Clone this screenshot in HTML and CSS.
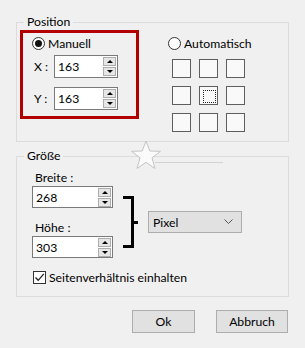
FILE: index.html
```html
<!DOCTYPE html>
<html lang="de">
<head>
    <meta charset="UTF-8">
    <title>Position und Größe</title>
    <link rel="stylesheet" href="styles.css">
</head>
<body>
    <div class="dialog">
        <!-- Position group -->
        <fieldset class="group pos">
            <legend>Position</legend>
            <div class="pos-row">
                <div class="manual">
                    <label class="radio"><span class="circle on"></span>Manuell</label>
                    <div class="field">
                        <span class="lbl">X :</span>
                        <div class="spin"><span class="val">163</span><span class="arrows"><i class="up"></i><i class="down"></i></span></div>
                    </div>
                    <div class="field">
                        <span class="lbl">Y :</span>
                        <div class="spin"><span class="val">163</span><span class="arrows"><i class="up"></i><i class="down"></i></span></div>
                    </div>
                </div>
                <div class="auto">
                    <label class="radio"><span class="circle"></span>Automatisch</label>
                    <div class="anchors">
                        <span class="cell"></span><span class="cell"></span><span class="cell"></span>
                        <span class="cell"></span><span class="cell focus"></span><span class="cell"></span>
                        <span class="cell"></span><span class="cell"></span><span class="cell"></span>
                    </div>
                </div>
            </div>
        </fieldset>

        <!-- Size group -->
        <fieldset class="group size">
            <legend>Größe</legend>
            <div class="size-row">
                <div class="dims">
                    <span class="dim-lbl">Breite :</span>
                    <div class="spin wide"><span class="val">268</span><span class="arrows"><i class="up"></i><i class="down"></i></span></div>
                    <span class="dim-lbl second">Höhe :</span>
                    <div class="spin wide"><span class="val">303</span><span class="arrows"><i class="up"></i><i class="down"></i></span></div>
                </div>
                <div class="bracket"><span class="tick"></span></div>
                <div class="select">Pixel
                    <svg width="9" height="6" viewBox="0 0 9 6"><path d="M0.5 0.5 L4.5 4.5 L8.5 0.5" fill="none" stroke="#555" stroke-width="1"/></svg>
                </div>
            </div>
            <label class="check"><span class="box">
                <svg width="11" height="11" viewBox="0 0 11 11"><path d="M1.5 5.5 L4.2 8.3 L9.8 1.8" fill="none" stroke="#222" stroke-width="1.3"/></svg>
            </span>Seitenverhältnis einhalten</label>
        </fieldset>

        <div class="buttons">
            <button class="btn ok">Ok</button>
            <button class="btn cancel">Abbruch</button>
        </div>

        <!-- watermark -->
        <svg class="mark" width="32" height="30" viewBox="0 0 32 30">
            <path d="M16 1 L19.8 11 L30.5 11.3 L22 17.8 L25 28.5 L16 22.3 L7 28.5 L10 17.8 L1.5 11.3 L12.2 11 Z" fill="#fbfbfb" stroke="#c4c4c4" stroke-width="1"/>
        </svg>
        <span class="mark-line"></span>
    </div>
</body>
</html>
```

FILE: styles.css
```css
* {
    margin: 0;
    padding: 0;
    box-sizing: border-box;
}

body, html {
    width: 100%;
    height: 100%;
    overflow: hidden;
    background: #f0f0f0;
    font-family: Lato, "Noto Sans", sans-serif;
    font-size: 12.2px;
    color: #000;
}

.dialog {
    position: relative;
    padding: 14px 16px 0 16px;
}

/* Group boxes */
.group {
    border: 1px solid #dcdcdc;
    padding: 0 3px 9px 3px;
    min-width: 0;
}

.group legend {
    margin-left: 4px;
    padding: 0 3px;
    line-height: 16px;
}

.pos-row {
    display: flex;
    gap: 29px;
}

.manual {
    width: 119px;
    height: 89px;
    border: 3px solid #b20000;
    padding: 2px 0 0 9px;
}

.radio {
    display: flex;
    align-items: center;
    height: 16px;
    gap: 3px;
}

.circle {
    width: 13px;
    height: 13px;
    border: 1px solid #333;
    border-radius: 50%;
    background: #fff;
    display: flex;
    align-items: center;
    justify-content: center;
}

.circle.on::after {
    content: "";
    width: 7px;
    height: 7px;
    border-radius: 50%;
    background: #111;
}

.field {
    display: flex;
    align-items: center;
    margin-top: 4px;
    margin-left: 2px;
}

.field + .field {
    margin-top: 9px;
}

.lbl {
    width: 20px;
}

/* Spin boxes */
.spin {
    width: 64px;
    height: 23px;
    border: 1px solid #7a7a7a;
    background: #fff;
    display: flex;
    align-items: center;
    justify-content: space-between;
    padding: 0 1px 0 3px;
}

.spin.wide {
    width: 81px;
    height: 22px;
}

.arrows {
    display: flex;
    flex-direction: column;
    gap: 1px;
}

.arrows i {
    width: 13px;
    height: 9px;
    border: 1px solid #adadad;
    background: #e6e6e6;
    display: flex;
    align-items: center;
    justify-content: center;
}

.arrows i::after {
    content: "";
    border-left: 3px solid transparent;
    border-right: 3px solid transparent;
}

.arrows .up::after {
    border-bottom: 3px solid #000;
}

.arrows .down::after {
    border-top: 3px solid #000;
}

.auto {
    padding-top: 5px;
}

.anchors {
    display: grid;
    grid-template-columns: repeat(3, 19px);
    grid-auto-rows: 19px;
    gap: 8px;
    margin: 8px 0 0 4px;
}

.cell {
    border: 1px solid #5e5e5e;
    background: #f9f9f9;
    padding: 3px;
}

.cell.focus::after {
    content: "";
    display: block;
    width: 100%;
    height: 100%;
    border: 1px dotted #222;
}

/* Size group */
.group.size {
    margin-top: 6px;
    padding: 0 3px 11px 15px;
}

.group.size legend {
    margin-left: -8px;
}

.size-row {
    display: flex;
    align-items: center;
}

.dims {
    display: flex;
    flex-direction: column;
    align-items: flex-start;
}

.dim-lbl {
    line-height: 15px;
    margin: 6px 0 1px 3px;
}

.dim-lbl.second {
    margin-top: 12px;
}

.bracket {
    position: relative;
    width: 11px;
    height: 52px;
    margin: 22px 0 0 10px;
    border: 3px solid #000;
    border-left: none;
}

.bracket .tick {
    position: absolute;
    right: -7px;
    top: 22px;
    width: 4px;
    height: 3px;
    background: #000;
}

.select {
    width: 94px;
    height: 22px;
    margin: 22px 0 0 14px;
    border: 1px solid #adadad;
    background: #e1e1e1;
    display: flex;
    align-items: center;
    justify-content: space-between;
    padding: 0 8px 0 4px;
}

.check {
    display: flex;
    align-items: center;
    gap: 3px;
    margin: 11px 0 0 1px;
    height: 16px;
}

.box {
    width: 13px;
    height: 13px;
    border: 1px solid #333;
    background: #fff;
    display: flex;
    align-items: center;
    justify-content: center;
}

/* Buttons */
.buttons {
    display: flex;
    justify-content: flex-end;
    gap: 21px;
    margin: 13px 1px 0 0;
}

.btn {
    height: 23px;
    border: 1px solid #adadad;
    background: #e1e1e1;
    font: inherit;
    color: #000;
}

.btn.ok {
    width: 63px;
}

.btn.cancel {
    width: 72px;
}

/* watermark over the group border */
.mark {
    position: absolute;
    left: 130px;
    top: 140px;
}

.mark-line {
    position: absolute;
    left: 155px;
    top: 162px;
    width: 68px;
    height: 1px;
    background: #d2d2d2;
}
```
